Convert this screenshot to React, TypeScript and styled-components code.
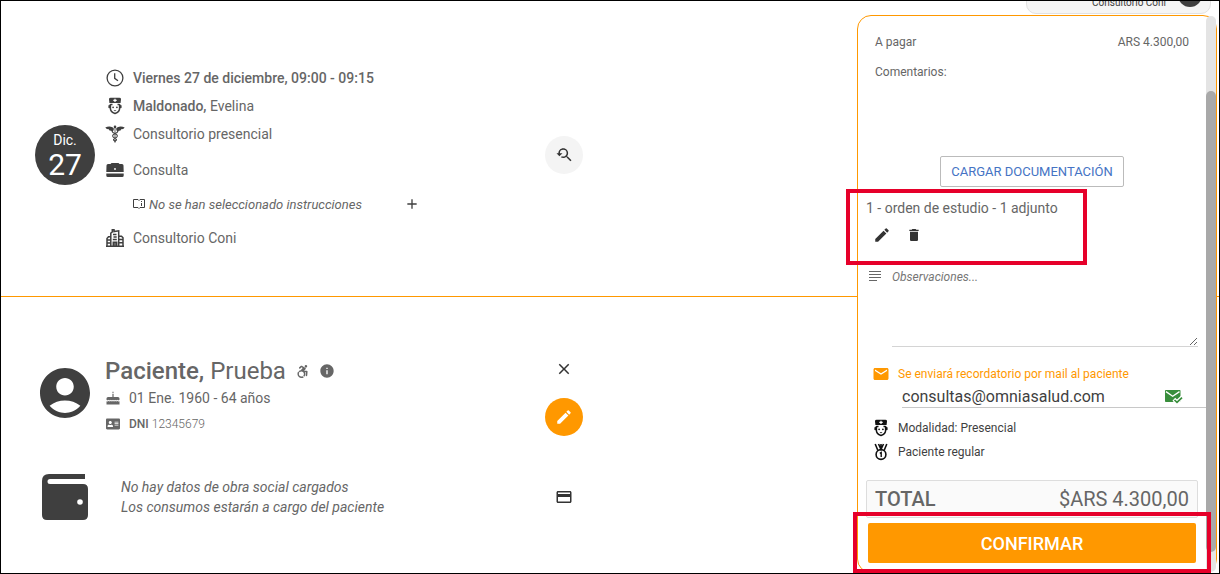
import React from "react";
import styled, { createGlobalStyle, css } from "styled-components";
import {
  MdAccountCircle, MdInfo, MdEdit, MdDelete, MdEmail,
  MdCreditCard, MdClose, MdAdd, MdYoutubeSearchedFor,
} from "react-icons/md";
import { FaAddressCard, FaAccessibleIcon } from "react-icons/fa";

const orange = "#ff9800";
const ink = "#3f3f3f";
const grey = "#666";
const red = "#e6002a";

const GlobalStyle = createGlobalStyle`
  * { box-sizing: border-box; }
  body { margin: 0; background: #fff; }
  body, button, input, textarea { font-family: Roboto, "Liberation Sans", sans-serif; }
  h2, p, ul { margin: 0; padding: 0; font-weight: 400; }
  ul { list-style: none; }
  svg { display: block; flex: none; }
`;

const Page = styled.div`
  display: grid;
  grid-template-columns: 1fr 362px;
  grid-template-rows: 14px 1fr;
  min-height: 100vh;
  border: 1px solid #000;
  overflow: hidden;
  color: ${grey};
  font-size: 14px;
`;

const Main = styled.main`
  grid-column: 1 / -1;
  grid-row: 1 / -1;
`;

const Header = styled.header`
  grid-column: 2;
  grid-row: 1;
  display: flex;
  justify-content: flex-end;
  align-items: flex-end;
  padding: 0 8px 1px 0;
`;

const AccountPill = styled.div`
  display: flex;
  align-items: center;
  justify-content: flex-end;
  gap: 12px;
  width: 185px;
  height: 32px;
  padding: 0 8px;
  border: 1px solid #e2e2e2;
  border-radius: 10px;
  background: #f5f5f5;
  color: ${ink};
  font-size: 10px;
  line-height: 14px;
  span { padding-top: 10px; }
`;

const AccountDot = styled.i`
  width: 24px;
  height: 24px;
  margin-bottom: 7px;
  border-radius: 50%;
  background: ${ink};
`;

const Section = styled.section<{ $divided?: boolean }>`
  ${(p) => p.$divided && css`border-bottom: 1px solid ${orange};`}
`;

const Columns = styled.div<{ $top: number; $bottom: number; $centered?: boolean }>`
  display: grid;
  grid-template-columns: 60px 1fr 38px;
  column-gap: 10px;
  align-items: ${(p) => (p.$centered ? "center" : "start")};
  width: 50%;
  padding: ${(p) => p.$top}px 27px ${(p) => p.$bottom}px 34px;
`;

const DateBadge = styled.div`
  display: flex;
  flex-direction: column;
  align-items: center;
  width: 60px;
  height: 60px;
  margin-top: 61px;
  padding-top: 7px;
  border-radius: 50%;
  background: ${ink};
  color: #fff;
  font-size: 14px;
  line-height: 16px;
  strong { font-size: 30px; line-height: 34px; font-weight: 400; }
`;

const Detail = styled.li<{ $height: number; $nested?: boolean }>`
  display: flex;
  align-items: center;
  gap: ${(p) => (p.$nested ? 4 : 8)}px;
  height: ${(p) => p.$height}px;
  padding-left: ${(p) => (p.$nested ? 28 : 0)}px;
  color: ${grey};
  font-size: ${(p) => (p.$nested ? 13 : 14)}px;
  font-style: ${(p) => (p.$nested ? "italic" : "normal")};
  svg { color: ${ink}; }
  b { font-weight: 500; }
`;

const IconCell = styled.span<{ $width: number; $dark?: boolean }>`
  display: flex;
  flex: none;
  justify-content: center;
  width: ${(p) => p.$width}px;
  color: ${(p) => (p.$dark ? "#111" : "inherit")};
`;

const IconButton = styled.button<{ $tone?: "soft" | "accent"; $size?: number }>`
  display: flex;
  align-items: center;
  justify-content: center;
  width: ${(p) => p.$size ?? 38}px;
  height: ${(p) => p.$size ?? 38}px;
  padding: 0;
  border: 0;
  border-radius: 50%;
  cursor: pointer;
  background: ${(p) => (p.$tone === "accent" ? orange : p.$tone === "soft" ? "#f4f4f4" : "transparent")};
  color: ${(p) => (p.$tone === "accent" ? "#fff" : "#333")};
`;

const SearchSlot = styled.div`
  margin-top: 72px;
`;

const AddSlot = styled.span`
  margin-left: 34px;
`;

const Stack = styled.div<{ $gap: number }>`
  display: flex;
  flex-direction: column;
  gap: ${(p) => p.$gap}px;
`;

const Portrait = styled.div`
  padding-top: 13px;
  color: ${ink};
`;

const PatientName = styled.h2`
  display: flex;
  align-items: center;
  margin-top: 7px;
  font-size: 24px;
  line-height: 28px;
  b { font-weight: 500; }
  svg:first-of-type { margin: 0 10px; }
`;

const PatientFact = styled.p<{ $small?: boolean }>`
  display: flex;
  align-items: center;
  gap: 8px;
  height: 26px;
  font-size: ${(p) => (p.$small ? 12 : 14)}px;
  b { font-weight: 500; }
  small { font-size: inherit; font-weight: 300; }
`;

const Coverage = styled.p`
  padding-left: 16px;
  font-size: 14px;
  line-height: 20px;
  font-style: italic;
`;

const WalletSlot = styled.div`
  padding: 0 7px;
`;

const Panel = styled.aside`
  grid-column: 2;
  grid-row: 2;
  display: flex;
  margin-right: 2px;
  border: 1px solid ${orange};
  border-radius: 14px;
  background: #fff;
`;

const PanelBody = styled.div`
  flex: 1;
  min-width: 0;
  padding: 16px 8px 9px;
`;

const ScrollTrack = styled.div`
  display: flex;
  width: 10px;
  padding: 75px 0 20px;
  border-radius: 5px;
  background: #e4e4e4;
`;

const ScrollThumb = styled.div`
  flex: 1;
  border-radius: 5px;
  background: #a9a9a9;
`;

const AmountRow = styled.div`
  display: flex;
  justify-content: space-between;
  padding: 0 9px;
  font-size: 12px;
  line-height: 20px;
`;

const Comments = styled.p`
  height: 94px;
  margin-top: 10px;
  padding: 0 9px;
  font-size: 12px;
  line-height: 20px;
`;

const UploadButton = styled.button`
  display: block;
  height: 31px;
  margin: 0 auto;
  padding: 0 10px;
  border: 1px solid #bbb;
  border-radius: 2px;
  background: #fff;
  color: #4573c4;
  font-size: 13px;
  white-space: nowrap;
  cursor: pointer;
`;

const Attachment = styled.div`
  position: relative;
  width: 221px;
  height: 76px;
  margin-top: 2px;
  padding-top: 9px;
  line-height: 20px;
`;

const Highlight = styled.span<{ $inset: string }>`
  position: absolute;
  inset: ${(p) => p.$inset};
  border: 4px solid ${red};
  pointer-events: none;
`;

const AttachmentActions = styled.div`
  display: flex;
  gap: 8px;
  padding: 5px 4px 0;
`;

const Notes = styled.label`
  display: flex;
  gap: 11px;
  margin: 1px 0 15px;
  padding-left: 3px;
  svg { margin-top: 5px; }
`;

const NotesField = styled.textarea`
  display: block;
  flex: 1;
  min-width: 0;
  height: 81px;
  padding: 3px 0;
  border: 0;
  border-bottom: 1px solid #d4d4d4;
  background: transparent;
  color: ${grey};
  font-size: 12px;
  line-height: 16px;
  resize: vertical;
  outline: 0;
  &::placeholder { color: #757575; font-style: italic; }
`;

const InfoRow = styled.p<{ $accent?: boolean }>`
  display: flex;
  align-items: center;
  gap: 8px;
  height: 24px;
  padding-left: 6px;
  color: ${(p) => (p.$accent ? orange : ink)};
  font-size: 12px;
`;

const EmailRow = styled.div`
  display: flex;
  align-items: center;
  height: 22px;
  margin: 0 -8px 8px 36px;
  padding-right: 23px;
  border-bottom: 1px solid #c8c8c8;
  color: #388e3c;
`;

const EmailField = styled.input`
  flex: 1;
  min-width: 0;
  padding: 0;
  border: 0;
  outline: 0;
  color: ${ink};
  font-size: 16px;
  line-height: 20px;
`;

const Total = styled.div`
  display: flex;
  justify-content: space-between;
  align-items: center;
  height: 38px;
  margin-top: 16px;
  padding: 0 8px;
  border: 1px solid #ddd;
  border-radius: 2px;
  background: #fafafa;
  font-size: 20px;
  b { font-weight: 500; }
`;

const ConfirmSlot = styled.div`
  position: relative;
  margin: 5px 2px 0;
`;

const ConfirmButton = styled.button`
  display: block;
  width: 100%;
  height: 40px;
  border: 0;
  border-radius: 2px;
  background: ${orange};
  color: #fff;
  font-size: 18px;
  font-weight: 500;
  cursor: pointer;
`;

const Clock = () => (
  <svg width="18" height="18" viewBox="0 0 18 18" fill="none" stroke="currentColor" strokeWidth="1.300">
    <circle cx="9" cy="9" r="7.900" />
    <path d="M8.700 4.200V9.300L12 11.700" />
  </svg>
);

const Nurse = () => (
  <svg width="14" height="18" viewBox="0 0 14 18" fill="currentColor">
    <path d="M1 2.200Q1 .8 2.600 .8H11.400Q13 .8 13 2.200L12.600 6H1.400z" />
    <path d="M7 1.700v3.400M5.300 3.400h3.400" stroke="#fff" strokeWidth="1.200" />
    <path d="M2.400 7v4.500C2.400 14 4.300 15.600 7 16.500 9.700 15.600 11.600 14 11.600 11.500V7" fill="none" stroke="currentColor" strokeWidth="1.500" />
    <path d="M2.400 7.500H4.500M11.600 7.500H9.500" stroke="currentColor" strokeWidth="1.400" />
    <rect x=".4" y="8" width="1.800" height="3.200" rx=".8" />
    <rect x="11.800" y="8" width="1.800" height="3.200" rx=".8" />
    <circle cx="5.100" cy="10.300" r=".9" />
    <circle cx="8.900" cy="10.300" r=".9" />
    <path d="M5.800 13.200h2.400v.6q-1.200.8-2.400 0z" />
  </svg>
);

const Caduceus = () => (
  <svg width="20" height="18" viewBox="0 0 20 18" fill="currentColor">
    <path d="M.3 2.600Q4 .8 7.500 2.300L9 3.800 8 6.500 6 5.800 4.500 5.500 3.800 4.200 1.800 3.900z M19.700 2.600Q16 .8 12.500 2.300L11 3.800l1 2.700 2-.7 1.500-.3.700-1.300 2-.3z" />
    <circle cx="10" cy="1.900" r="1.300" />
    <path d="M9.600 2h.8v15.500h-.8z" />
    <path d="M7.200 5.500C6 8.500 12.800 8.500 12.400 11S8.300 13 8.500 14.600s2.200 1 1.500 2.400M12.800 5.500C14 8.500 7.200 8.500 7.600 11s4.100 2 3.900 3.600-2.200 1-1.500 2.400" fill="none" stroke="currentColor" strokeWidth="1.100" />
  </svg>
);

const Briefcase = () => (
  <svg width="18" height="18" viewBox="0 0 18 18" fill="currentColor">
    <path d="M4.500 3 5.500 2h7l1 1H16q1.500 0 1.500 1.500L17.700 11H.3L.5 4.500Q.5 3 2 3zM.3 12.600h17.400V14.500q0 1.500-1.500 1.500H1.800Q.3 16 .3 14.500z" />
    <circle cx="9" cy="8" r=".9" fill="#fff" />
  </svg>
);

const Book = () => (
  <svg width="12" height="12" viewBox="0 0 12 12" fill="none" stroke="currentColor">
    <path d="M.5 1.500H5L6 2.500 7 1.500h4.500v8H7l-1 1-1-1H.5z" />
    <path d="M8.500 3v1M8.500 5v3" />
  </svg>
);

const Building = () => (
  <svg width="18" height="18" viewBox="0 0 18 18" fill="none" stroke="currentColor" strokeWidth="1.500">
    <path d="M4.800 17V4.200L6.300 3V.8H8V2.600L12.700 1.800V17M4.800 7.800H2.500L1 9.500V17M12.700 7.300H15.500L17 8.800V17M0 17.200h18" />
    <path d="M1 11h3.500M1 14h3.500M13 10.500h4M13 13.800h4M7 5.500h3.500M7.500 8h3.200M6.800 10.500h4M7.300 17v-3.700h3.400V17M9 13.500V17" />
  </svg>
);

const Cake = () => (
  <svg width="14" height="14" viewBox="0 0 14 14" fill="currentColor">
    <path d="M7 .3q1.300 1.400 0 2.500-1.300-1.100 0-2.500zM6.400 3h1.200v3H12q1.500 0 1.500 1.500v1.300q-1.100 1-2.200 0-1.100 1-2.200 0Q8 9.800 7 8.800q-1 1-2.100 0-1.100 1-2.200 0-1.100 1-2.200 0V7.500Q.5 6 2 6h4.400zM.5 10.200q1.100.5 2.200-.1 1.100.8 2.200 0 1.100.8 2.100 0 1 .8 2.100 0 1.100.8 2.200 0 1.100.6 2.200.1v3.300H.5z" />
  </svg>
);

const Medal = () => (
  <svg width="14" height="18" viewBox="0 0 14 18" fill="none" stroke="currentColor" strokeWidth="1.600">
    <circle cx="7" cy="11.500" r="4.900" />
    <path d="M1.200 1 3.900 7.500M4.500 1 7 6.300 9.500 1M12.800 1 10.100 7.500M7 1v5" />
    <path d="M5.800 10.300 7.200 9.500V14" strokeWidth="1.400" />
  </svg>
);

const Lines = () => (
  <svg width="12" height="12" viewBox="0 0 12 12" stroke="currentColor">
    <path d="M0 .5h12M0 3.500h12M0 6.500h12M0 9.500h8" />
  </svg>
);

const MailChecked = () => (
  <svg width="18" height="14" viewBox="0 0 18 14">
    <rect width="15.500" height="12" rx=".8" fill="currentColor" />
    <path d="M1 1.600 7.700 6.200 14.500 1.600" fill="none" stroke="#fff" strokeWidth="1.300" />
    <path d="M8.800 9.300 12 12.300 17.300 7.200" fill="none" stroke="#fff" strokeWidth="4" />
    <path d="M9.500 10 12 12.400 17 7.600" fill="none" stroke="currentColor" strokeWidth="1.700" />
  </svg>
);

const Wallet = () => (
  <svg width="46" height="46" viewBox="0 0 46 46" fill={ink}>
    <path d="M7 0H43V5H8a2.500 2.500 0 0 0 0 5H41q5 0 5 5V41q0 5-5 5H5q-5 0-5-5V7Q0 0 7 0z" />
    <circle cx="38" cy="28" r="2.800" fill="#fff" />
  </svg>
);

function Appointment() {
  return (
    <Section $divided>
      <Columns $top={63} $bottom={36}>
        <DateBadge>Dic.<strong>27</strong></DateBadge>
        <ul>
          <Detail $height={28}><IconCell $width={20}><Clock /></IconCell><span><b>Viernes 27 de diciembre, 09:00 - 09:15</b></span></Detail>
          <Detail $height={28}><IconCell $width={20}><Nurse /></IconCell><span><b>Maldonado,</b> Evelina</span></Detail>
          <Detail $height={28}><IconCell $width={20}><Caduceus /></IconCell><span>Consultorio presencial</span></Detail>
          <Detail $height={44}><IconCell $width={20}><Briefcase /></IconCell><span>Consulta</span></Detail>
          <Detail $height={24} $nested>
            <Book /><span>No se han seleccionado instrucciones</span>
            <AddSlot><IconButton $size={24} aria-label="Agregar instrucciones"><MdAdd size={16} /></IconButton></AddSlot>
          </Detail>
          <Detail $height={44}><IconCell $width={20}><Building /></IconCell><span>Consultorio Coni</span></Detail>
        </ul>
        <SearchSlot>
          <IconButton $tone="soft" aria-label="Buscar turno"><MdYoutubeSearchedFor size={18} /></IconButton>
        </SearchSlot>
      </Columns>
    </Section>
  );
}

function Patient() {
  return (
    <Section>
      <Columns $top={53} $bottom={0}>
        <Portrait><MdAccountCircle size={60} /></Portrait>
        <div>
          <PatientName>
            <span><b>Paciente,</b> Prueba</span>
            <FaAccessibleIcon size={13} /><MdInfo size={16} />
          </PatientName>
          <PatientFact><IconCell $width={16}><Cake /></IconCell><span>01 Ene. 1960 - 64 años</span></PatientFact>
          <PatientFact $small><IconCell $width={16}><FaAddressCard size={14} /></IconCell><span><b>DNI</b> <small>12345679</small></span></PatientFact>
        </div>
        <Stack $gap={10}>
          <IconButton aria-label="Quitar paciente"><MdClose size={18} /></IconButton>
          <IconButton $tone="accent" aria-label="Editar paciente"><MdEdit size={18} /></IconButton>
        </Stack>
      </Columns>
      <Columns $top={37} $bottom={40} $centered>
        <WalletSlot><Wallet /></WalletSlot>
        <Coverage>No hay datos de obra social cargados<br />Los consumos estarán a cargo del paciente</Coverage>
        <IconButton aria-label="Obra social"><MdCreditCard size={18} /></IconButton>
      </Columns>
    </Section>
  );
}

function Checkout() {
  return (
    <Panel>
      <PanelBody>
        <AmountRow><span>A pagar</span><span>ARS 4.300,00</span></AmountRow>
        <Comments>Comentarios:</Comments>
        <UploadButton>CARGAR DOCUMENTACIÓN</UploadButton>
        <Attachment>
          1 - orden de estudio - 1 adjunto
          <AttachmentActions>
            <IconButton $size={24} aria-label="Editar adjunto"><MdEdit size={18} /></IconButton>
            <IconButton $size={24} aria-label="Eliminar adjunto"><MdDelete size={16} /></IconButton>
          </AttachmentActions>
          <Highlight $inset="0 0 0 -20px" />
        </Attachment>
        <Notes>
          <Lines />
          <NotesField aria-label="Observaciones" placeholder="Observaciones..." />
        </Notes>
        <Stack $gap={0}>
          <InfoRow $accent><IconCell $width={18}><MdEmail size={18} /></IconCell>Se enviará recordatorio por mail al paciente</InfoRow>
          <EmailRow>
            <EmailField type="email" aria-label="Correo del paciente" defaultValue="consultas@omniasalud.com" />
            <MailChecked />
          </EmailRow>
          <InfoRow><IconCell $width={18} $dark><Nurse /></IconCell>Modalidad: Presencial</InfoRow>
          <InfoRow><IconCell $width={18} $dark><Medal /></IconCell>Paciente regular</InfoRow>
        </Stack>
        <Total><b>TOTAL</b><span>$ARS 4.300,00</span></Total>
        <ConfirmSlot>
          <ConfirmButton>CONFIRMAR</ConfirmButton>
          <Highlight $inset="-11px -15px -10px -15px" />
        </ConfirmSlot>
      </PanelBody>
      <ScrollTrack><ScrollThumb /></ScrollTrack>
    </Panel>
  );
}

export default function App() {
  return (
    <>
      <GlobalStyle />
      <Page>
        <Main>
          <Appointment />
          <Patient />
        </Main>
        <Header>
          <AccountPill><span>Consultorio Coni</span><AccountDot /></AccountPill>
        </Header>
        <Checkout />
      </Page>
    </>
  );
}
